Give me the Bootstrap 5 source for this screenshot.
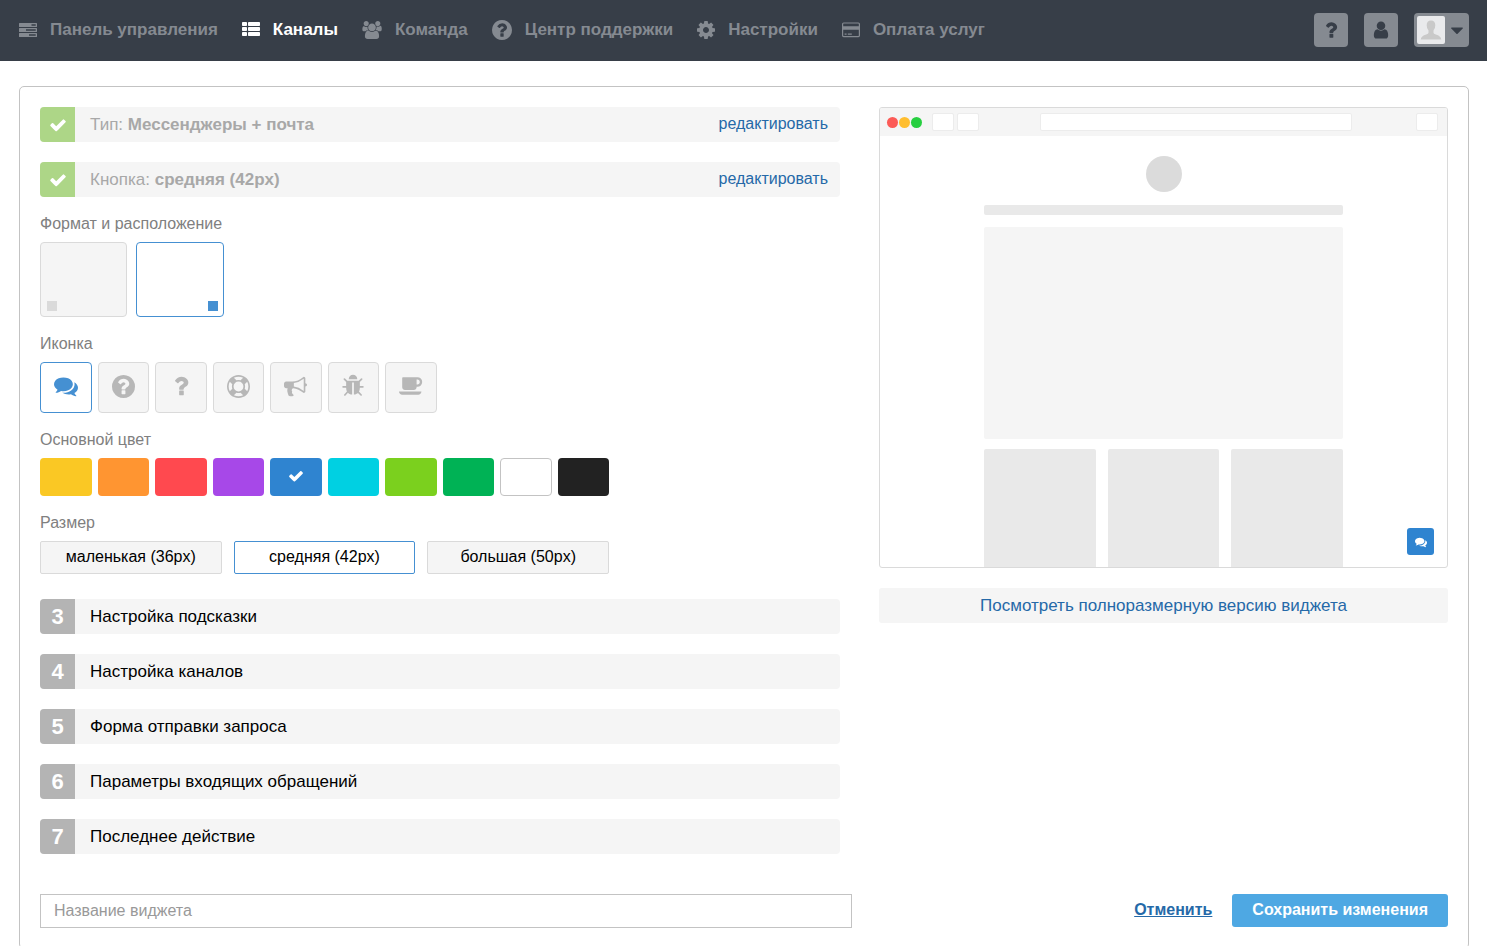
<!DOCTYPE html>
<html lang="ru">
<head>
<meta charset="utf-8">
<meta name="viewport" content="width=device-width, initial-scale=1">
<title>Настройка виджета</title>
<link rel="stylesheet" href="https://cdn.jsdelivr.net/npm/bootstrap@5.3.0/dist/css/bootstrap.min.css">
<style>
  :root {
    --ink: #373e48;
    --steel: #858a91;
    --fog: #f5f5f5;
    --line: #dadada;
    --accent: #4590d2;
    --link: #2569a8;
  }
  body { font-family: "Liberation Sans", Arial, sans-serif; font-size: 16px; color: #000; background: #fff; }
  svg { fill: currentColor; display: block; flex: none; }
  .icon-16 { width: 16px; height: 16px; }
  .icon-18 { width: 18px; height: 18px; }
  .icon-20 { width: 20px; height: 20px; }
  .icon-24 { width: 24px; height: 24px; }
  .icon-wide { width: 20px; height: 18px; }
  .icon-ring { width: 23px; height: 23px; }

  .topbar { background: var(--ink); min-height: 61px; padding: 0 18px 2px 19px; }
  .topbar .nav { column-gap: 24px; }
  .topbar .nav-link { display: flex; align-items: center; gap: 13px; padding: 0; color: var(--steel); font-size: 17px; font-weight: 700; line-height: 20px; }
  .topbar .nav-link.active { color: #fff; }
  .tool-btn { width: 34px; height: 34px; padding: 0; border: 0; border-radius: 4px; background: var(--steel); color: var(--ink); display: flex; align-items: center; justify-content: center; }
  .tool-btn:hover { background: #969ba2; color: var(--ink); }
  .tool-user { width: 55px; gap: 6px; padding-left: 3px; justify-content: flex-start; }
  .avatar { width: 28px; height: 28px; border-radius: 2px; background: #e9eaec; color: #c9c9c9; }

  .panel { margin: 25px 18px 20px 19px; padding: 20px; border: 1px solid #c3c3c3; border-radius: 5px; }
  .panel-cols { display: grid; grid-template-columns: minmax(0, 800fr) minmax(0, 569fr); column-gap: 39px; align-items: start; }

  .step { display: flex; align-items: stretch; width: 100%; min-height: 35px; padding: 0; border: 0; border-radius: 4px; overflow: hidden; background: var(--fog); color: #000; font-size: 17px; line-height: 35px; text-align: left; }
  .step-mark { flex: 0 0 35px; display: flex; align-items: center; justify-content: center; background: #b4b4b4; color: #fff; font-size: 22px; font-weight: 700; }
  .step-done { color: #a8a8a8; }
  .step-done .step-mark { background: #add687; }
  .step-text { flex: 1; padding-left: 15px; }
  .step a { font-size: 16px; color: var(--link); text-decoration: none; padding-right: 12px; line-height: 33px; }

  .choice { max-width: 569px; }
  .choice legend { float: none; margin: 0; padding: 17px 0 8px; font-size: 16px; line-height: 20px; color: #808080; }
  .choice-grid { display: grid; gap: 6px; grid-template-columns: repeat(10, minmax(0, 1fr)); }
  .choice-grid.by-six { gap: 9px; grid-template-columns: repeat(6, minmax(0, 1fr)); }
  .choice-grid.by-three { gap: 12px; grid-template-columns: repeat(3, minmax(0, 1fr)); }
  .choice .btn { --bs-btn-padding-x: 0; --bs-btn-padding-y: 0; --bs-btn-border-radius: 4px; --bs-btn-bg: var(--fog); --bs-btn-border-color: var(--line); --bs-btn-color: #b7b7b7; --bs-btn-active-bg: #fff; --bs-btn-active-border-color: var(--accent); --bs-btn-active-color: var(--accent); --bs-btn-hover-bg: #fff; --bs-btn-hover-border-color: var(--accent); display: flex; align-items: center; justify-content: center; }
  .choice .place { height: 75px; align-items: flex-end; justify-content: flex-start; padding: 5px 6px; }
  .choice .place.place-right { justify-content: flex-end; padding-right: 5px; }
  .place i { width: 10px; height: 10px; background: #dadada; }
  .btn-check:checked + .place i { background: var(--accent); }
  .choice .glyph { height: 51px; padding-bottom: 3px; }
  .choice .swatch { height: 38px; border: 1px solid transparent; color: #fff; padding-bottom: 3px; }
  .swatch svg { visibility: hidden; }
  .btn-check:checked + .swatch svg { visibility: visible; }
  .choice .btn-check:checked + .swatch { color: #fff; border-color: transparent; }
  .c-yellow { background: #fac824 !important; }
  .c-orange { background: #ff9531 !important; }
  .c-red { background: #ff494f !important; }
  .c-violet { background: #a748e8 !important; }
  .c-blue { background: #2f84d0 !important; }
  .c-cyan { background: #00d0e2 !important; }
  .c-lime { background: #7bd01e !important; }
  .c-green { background: #00b255 !important; }
  .choice .c-white { background: #fff; border-color: #c3c3c3; }
  .c-black { background: #222 !important; }
  .choice .size { height: 33px; border-radius: 2px; --bs-btn-color: #000; --bs-btn-active-color: #000; --bs-btn-hover-color: #000; font-size: 16px; line-height: 20px; padding-bottom: 2px; }
  .steps-next { margin-top: 25px; }
  .steps-gap { gap: 20px; }

  .preview { height: 461px; border: 1px solid var(--line); border-radius: 3px; overflow: hidden; display: flex; flex-direction: column; }
  .preview-bar { flex: none; height: 28px; padding: 0 9px 0 7px; background: var(--fog); display: flex; align-items: center; }
  .dots { display: flex; gap: 1px; margin-right: 10px; }
  .dot { width: 11px; height: 11px; border-radius: 50%; }
  .dot-red { background: #fc5b57; }
  .dot-amber { background: #ffbe2f; }
  .dot-green { background: #27cf40; }
  .slot { height: 18px; border: 1px solid #ececec; border-radius: 2px; background: #fff; flex: 0 0 22px; }
  .slot + .slot { margin-left: 3px; }
  .slot-address { flex: 0 1 312px; }
  .preview-page { flex: 1; min-height: 0; padding: 20px 104px 0; display: flex; flex-direction: column; }
  .ghost-face { width: 36px; height: 36px; border-radius: 50%; background: #dbdbdb; flex: none; }
  .ghost-line { height: 10px; margin: 13px 0 12px; border-radius: 2px; background: #e9e9e9; flex: none; }
  .ghost-hero { height: 212px; margin-bottom: 10px; border-radius: 2px; background: var(--fog); flex: none; }
  .ghost-cards { display: grid; grid-template-columns: repeat(3, 1fr); gap: 12px; flex: 1; }
  .ghost-cards div { background: #e9e9e9; border-radius: 2px 2px 0 0; }
  .widget { position: absolute; right: 13px; bottom: 12px; width: 27px; height: 27px; border-radius: 3px; background: #2f84d0; color: #fff; display: flex; align-items: center; justify-content: center; }
  .full-link { display: block; margin-top: 20px; border-radius: 3px; background: var(--fog); color: var(--link); font-size: 17px; line-height: 35px; text-align: center; text-decoration: none; }

  .panel-foot { margin-top: 40px; }
  .name-field { width: 57.7%; height: 34px; border: 1px solid #c3c3c3; border-radius: 0; padding: 0 13px; font-size: 16px; }
  .name-field::placeholder { color: #999; }
  .foot-actions { gap: 20px; }
  .cancel { color: var(--link); font-size: 16px; font-weight: 700; line-height: 32px; }
  .save { --bs-btn-bg: #4ea8e3; --bs-btn-hover-bg: #3f9ad6; --bs-btn-color: #fff; --bs-btn-hover-color: #fff; height: 33px; padding: 0 20px 2px; border: 0; border-radius: 3px; font-size: 16px; font-weight: 700; line-height: 31px; }
</style>
</head>
<body>

<svg class="d-none" aria-hidden="true">
  <symbol id="i-check" viewBox="0 0 1792 1792"><path d="M1671 566q0 40-28 68l-724 724-136 136q-28 28-68 28t-68-28l-136-136-362-362q-28-28-28-68t28-68l136-136q28-28 68-28t68 28l294 295 656-657q28-28 68-28t68 28l136 136q28 28 28 68z"/></symbol>
  <symbol id="i-comments" viewBox="0 0 1792 1792"><path d="M1408 768q0 139-94 257t-256.500 186.500-353.500 68.500q-86 0-176-16-124 88-278 128-36 9-86 16h-3q-11 0-20.500-8t-11.500-21q-1-3-1-6.500t.5-6.500 2-6l2.500-5 3.500-5.500 4-5 4.500-5 4-4.500q5-6 23-25t26-29.500 22.500-29 25-38.500 20.500-44q-124-72-195-177t-71-224q0-139 94-257t256.500-186.500 353.500-68.500 353.500 68.500 256.500 186.500 94 257zm384 256q0 120-71 224.500t-195 176.500q10 24 20.500 44t25 38.500 22.500 29 26 29.500 23 25q1 1 4 4.500t4.500 5 4 5 3.500 5.500l2.500 5 2 6 .5 6.500-1 6.500q-3 14-13 22t-22 7q-50-7-86-16-154-40-278-128-90 16-176 16-271 0-472-132 58 4 88 4 161 0 309-45t264-129q125-92 192-212t67-254q0-77-23-152 129 71 204 178t75 230z"/></symbol>
  <symbol id="i-question-circle" viewBox="128 128 1536 1536"><path d="M1024 1376v-192q0-14-9-23t-23-9h-192q-14 0-23 9t-9 23v192q0 14 9 23t23 9h192q14 0 23-9t9-23zm256-672q0-88-55.500-163t-138.500-116-170-41q-243 0-371 213-15 24 8 42l132 100q7 6 19 6 16 0 25-12 53-68 86-92 34-24 86-24 48 0 85.500 26t37.500 59q0 38-20 61t-68 45q-63 28-115.500 86.500t-52.500 125.500v36q0 14 9 23t23 9h192q14 0 23-9t9-23q0-19 21.500-49.500t54.500-49.500q32-18 49-28.500t46-35 44.500-48 28-60.500 12.500-81zm384 192q0 209-103 385.500t-279.500 279.500-385.500 103-385.500-103-279.500-279.500-103-385.500 103-385.500 279.500-279.500 385.500-103 385.500 103 279.500 279.500 103 385.500z"/></symbol>
  <symbol id="i-question" viewBox="64 64 1664 1664"><path d="M1088 1256v240q0 16-12 28t-28 12h-240q-16 0-28-12t-12-28v-240q0-16 12-28t28-12h240q16 0 28 12t12 28zm316-600q0 54-15.500 101t-35 76.500-55 59.500-57.500 43.500-61 35.500q-41 23-68.500 65t-27.500 67q0 17-12 32.500t-28 15.500h-240q-15 0-25.500-18.500t-10.500-37.500v-45q0-83 65-156.500t143-108.500q59-27 84-56t25-76q0-42-46.500-74t-107.500-32q-65 0-108 29-35 25-107 115-13 16-31 16-12 0-25-8l-164-125q-13-10-15.500-25t5.500-28q160-266 464-266 80 0 161 31t146 83 106 127.500 41 158.500z"/></symbol>
  <symbol id="i-ring" viewBox="0 0 1792 1792"><path d="M896 0q182 0 348 71t286 191 191 286 71 348-71 348-191 286-286 191-348 71-348-71-286-191-191-286-71-348 71-348 191-286 286-191 348-71zm0 128q-190 0-361 90l194 194q82-28 167-28t167 28l194-194q-171-90-361-90zm-678 1129l194-194q-28-82-28-167t28-167l-194-194q-90 171-90 361t90 361zm678 407q190 0 361-90l-194-194q-82 28-167 28t-167-28l-194 194q171 90 361 90zm0-384q159 0 271.500-112.500t112.500-271.500-112.500-271.500-271.500-112.500-271.500 112.500-112.500 271.500 112.500 271.500 271.500 112.500zm484-217l194 194q90-171 90-361t-90-361l-194 194q28 82 28 167t-28 167z"/></symbol>
  <symbol id="i-bullhorn" viewBox="0 0 1792 1792"><path d="M1664 640q53 0 90.500 37.500t37.500 90.500-37.500 90.500-90.500 37.500v384q0 52-38 90t-90 38q-417-347-812-380-58 19-91 66t-31 100.500 40 92.500q-20 33-23 65.500t6 58 33.500 55 48 50 61.500 50.500q-29 58-111.500 83t-168.500 11.500-132-55.500q-7-23-29.500-87.500t-32-94.500-23-89-15-101 3.500-98.500 22-110.500h-122q-66 0-113-47t-47-113v-192q0-66 47-113t113-47h480q435 0 896-384 52 0 90 38t38 90v384zm-128 604v-954q-394 302-768 343v270q377 42 768 341z"/></symbol>
  <symbol id="i-bug" viewBox="0 0 1792 1792"><path d="M1696 960q0 26-19 45t-45 19h-224q0 171-67 290l208 209q19 19 19 45t-19 45q-18 19-45 19t-45-19l-198-197q-5 5-15 13t-42 28.500-65 36.500-82 29-97 13v-896h-128v896q-51 0-101.500-13.500t-87-33-66-39-43.500-32.500l-15-14-183 207q-20 21-48 21-24 0-43-16-19-18-20.500-44.500t15.500-46.500l202-227q-58-114-58-274h-224q-26 0-45-19t-19-45 19-45 45-19h224v-294l-173-173q-19-19-19-45t19-45 45-19 45 19l173 173h844l173-173q19-19 45-19t45 19 19 45-19 45l-173 173v294h224q26 0 45 19t19 45zm-480-576h-640q0-133 93.500-226.500t226.500-93.500 226.500 93.500 93.500 226.500z"/></symbol>
  <symbol id="i-coffee" viewBox="0 64 1920 1792"><path d="M1664 640q0-80-56-136t-136-56h-64v384h64q80 0 136-56t56-136zm-1664 768h1792q0 106-75 181t-181 75h-1280q-106 0-181-75t-75-181zm1856-768q0 159-112.500 271.500t-271.500 112.500h-64v32q0 92-66 158t-158 66h-704q-92 0-158-66t-66-158v-736q0-26 19-45t45-19h1152q159 0 271.500 112.500t112.500 271.500z"/></symbol>
  <symbol id="i-cog" viewBox="128 128 1536 1536"><path d="M1152 896q0-106-75-181t-181-75-181 75-75 181 75 181 181 75 181-75 75-181zm512-109v222q0 12-8 23t-20 13l-185 28q-19 54-39 91 35 50 107 138 10 12 10 25t-9 23q-27 37-99 108t-94 71q-12 0-26-9l-138-108q-44 23-91 38-16 136-29 186-7 28-36 28h-222q-14 0-24.500-8.500t-11.500-21.500l-28-184q-49-16-90-37l-141 107q-10 9-25 9-14 0-25-11-126-114-165-168-7-10-7-23 0-12 8-23 15-21 51-66.500t54-70.500q-27-50-41-99l-183-27q-13-2-21-12.500t-8-23.500v-222q0-12 8-23t19-13l186-28q14-46 39-92-40-57-107-138-10-12-10-24 0-10 9-23 26-36 98.500-107.500t94.500-71.500q13 0 26 10l138 107q44-23 91-38 16-136 29-186 7-28 36-28h222q14 0 24.500 8.500t11.500 21.500l28 184q49 16 90 37l142-107q9-9 24-9 13 0 25 10 129 119 165 170 7 8 7 22 0 12-8 23-15 21-51 66.500t-54 70.500q26 50 41 98l183 28q13 2 21 12.500t8 23.500z"/></symbol>
  <symbol id="i-user" viewBox="0 0 1792 1792"><path d="M1536 1399q0 109-62.500 187t-150.500 78h-854q-88 0-150.500-78t-62.500-187q0-85 8.500-160.500t31.500-152 58.500-131 94-89 134.500-34.500q131 128 313 128t313-128q76 0 134.500 34.500t94 89 58.500 131 31.500 152 8.500 160.500zm-256-887q0 159-112.500 271.500t-271.500 112.500-271.500-112.500-112.500-271.500 112.500-271.500 271.500-112.500 271.500 112.500 112.500 271.500z"/></symbol>
  <symbol id="i-users" viewBox="0 0 1920 1792"><path d="M593 896q-162 5-265 128h-134q-82 0-138-40.500t-56-118.500q0-353 124-353 6 0 43.500 21t97.500 42.500 119 21.500q67 0 133-23-5 37-5 66 0 159 93 293zm1071 637q0 120-73 189.500t-194 69.500h-874q-121 0-194-69.500t-73-189.500q0-53 3.500-103.500t14-109 26.500-108.500 43-97.500 62-81 85.500-53.500 111.500-20q10 0 43 21.500t73 48 107 48 135 21.500 135-21.500 107-48 73-48 43-21.500q61 0 111.500 20t85.500 53.500 62 81 43 97.500 26.500 108.500 14 109 3.500 103.500zm-1024-1277q0 106-75 181t-181 75-181-75-75-181 75-181 181-75 181 75 75 181zm704 384q0 159-112.500 271.500t-271.500 112.500-271.500-112.500-112.500-271.500 112.500-271.500 271.500-112.500 271.500 112.500 112.500 271.500zm576 225q0 78-56 118.500t-138 40.500h-134q-103-123-265-128 93-134 93-293 0-29-5-66 66 23 133 23 59 0 119-21.500t97.500-42.500 43.500-21q124 0 124 353zm-128-609q0 106-75 181t-181 75-181-75-75-181 75-181 181-75 181 75 75 181z"/></symbol>
  <symbol id="i-tasks" viewBox="0 0 18 18"><path fill-rule="evenodd" d="M.6 2h16.800q.6 0 .6.600v2.800q0 .6-.6.600H.6q-.6 0-.6-.6V2.600Q0 2 .6 2zm11.900 1.300v1.400h4.200V3.300zM.6 7h16.800q.6 0 .6.600v2.800q0 .6-.6.600H.6q-.6 0-.6-.6V7.600Q0 7 .6 7zm6.400 1.300v1.400h9.700V8.300zM.6 12h16.800q.6 0 .6.600v2.800q0 .6-.6.600H.6q-.6 0-.6-.6v-2.800q0-.6.600-.6zm9.400 1.300v1.400h6.700v-1.400z"/></symbol>
  <symbol id="i-list" viewBox="0 0 18 18"><rect x="0" y="1" width="5" height="4" rx=".8"/><rect x="6" y="1" width="12" height="4" rx=".8"/><rect x="0" y="6" width="5" height="4" rx=".8"/><rect x="6" y="6" width="12" height="4" rx=".8"/><rect x="0" y="11" width="5" height="4" rx=".8"/><rect x="6" y="11" width="12" height="4" rx=".8"/></symbol>
  <symbol id="i-card" viewBox="0 0 18 18"><path fill-rule="evenodd" d="M1.600 1.400h14.800q1.600 0 1.600 1.600v11.600q0 1.600-1.600 1.600H1.600Q0 16.200 0 14.600V3q0-1.600 1.600-1.600zm0 1.200q-.4 0-.4.400v2.200h15.600V3q0-.4-.4-.4zM1.200 8.800v5.800q0 .4.400.4h14.800q.4 0 .4-.4V8.800zM2.600 12.600h2v1.200h-2zm3.200 0h4v1.200h-4z"/></symbol>
  <symbol id="i-face" viewBox="0 0 28 28"><path d="M14 4.500q4.300 0 4.300 4.700 0 3.400-1.800 5.300v2.300q0 1 2.300 1.800 5 1.500 5.500 4.900H3.700q.5-3.400 5.500-4.900 2.300-.8 2.300-1.800v-2.300Q9.700 12.600 9.700 9.200q0-4.700 4.300-4.700z"/></symbol>
</svg>

<header class="topbar navbar d-flex justify-content-between">
  <nav class="nav" aria-label="Основное меню">
    <a class="nav-link" href="#"><svg class="icon-18"><use href="#i-tasks"/></svg>Панель управления</a>
    <a class="nav-link active" aria-current="page" href="#"><svg class="icon-18"><use href="#i-list"/></svg>Каналы</a>
    <a class="nav-link" href="#"><svg class="icon-wide"><use href="#i-users"/></svg>Команда</a>
    <a class="nav-link" href="#"><svg class="icon-20"><use href="#i-question-circle"/></svg>Центр поддержки</a>
    <a class="nav-link" href="#"><svg class="icon-18"><use href="#i-cog"/></svg>Настройки</a>
    <a class="nav-link" href="#"><svg class="icon-18"><use href="#i-card"/></svg>Оплата услуг</a>
  </nav>
  <div class="d-flex gap-3">
    <button type="button" class="tool-btn" aria-label="Помощь"><svg class="icon-20"><use href="#i-question"/></svg></button>
    <button type="button" class="tool-btn" aria-label="Профиль"><svg class="icon-20"><use href="#i-user"/></svg></button>
    <button type="button" class="tool-btn tool-user" aria-label="Меню пользователя">
      <svg class="avatar"><use href="#i-face"/></svg>
      <svg width="12" height="8" viewBox="0 0 12 8"><path d="M.6 1.500h10.800q.8.200.3 1L6.600 7.700q-.6.500-1.200 0L.3 2.500q-.5-.8.300-1z"/></svg>
    </button>
  </div>
</header>

<main class="panel">
  <div class="panel-cols">
    <section>
      <div class="d-flex flex-column steps-gap">
        <div class="step step-done">
          <span class="step-mark"><svg class="icon-18"><use href="#i-check"/></svg></span>
          <span class="step-text">Тип: <b>Мессенджеры + почта</b></span>
          <a href="#">редактировать</a>
        </div>
        <div class="step step-done">
          <span class="step-mark"><svg class="icon-18"><use href="#i-check"/></svg></span>
          <span class="step-text">Кнопка: <b>средняя (42px)</b></span>
          <a href="#">редактировать</a>
        </div>
      </div>

      <fieldset class="choice">
        <legend>Формат и расположение</legend>
        <div class="choice-grid by-six">
          <input class="btn-check" type="radio" name="place" id="place-l"><label class="btn place" for="place-l" aria-label="Слева"><i></i></label>
          <input class="btn-check" type="radio" name="place" id="place-r" checked><label class="btn place place-right" for="place-r" aria-label="Справа"><i></i></label>
        </div>
      </fieldset>

      <fieldset class="choice">
        <legend>Иконка</legend>
        <div class="choice-grid">
          <input class="btn-check" type="radio" name="icon" id="ic-1" checked><label class="btn glyph" for="ic-1" aria-label="Чат"><svg class="icon-24"><use href="#i-comments"/></svg></label>
          <input class="btn-check" type="radio" name="icon" id="ic-2"><label class="btn glyph" for="ic-2" aria-label="Вопрос в круге"><svg class="icon-ring"><use href="#i-question-circle"/></svg></label>
          <input class="btn-check" type="radio" name="icon" id="ic-3"><label class="btn glyph" for="ic-3" aria-label="Вопрос"><svg class="icon-24"><use href="#i-question"/></svg></label>
          <input class="btn-check" type="radio" name="icon" id="ic-4"><label class="btn glyph" for="ic-4" aria-label="Спасательный круг"><svg class="icon-ring"><use href="#i-ring"/></svg></label>
          <input class="btn-check" type="radio" name="icon" id="ic-5"><label class="btn glyph" for="ic-5" aria-label="Рупор"><svg class="icon-ring"><use href="#i-bullhorn"/></svg></label>
          <input class="btn-check" type="radio" name="icon" id="ic-6"><label class="btn glyph" for="ic-6" aria-label="Жук"><svg class="icon-24"><use href="#i-bug"/></svg></label>
          <input class="btn-check" type="radio" name="icon" id="ic-7"><label class="btn glyph" for="ic-7" aria-label="Кофе"><svg class="icon-24"><use href="#i-coffee"/></svg></label>
        </div>
      </fieldset>

      <fieldset class="choice">
        <legend>Основной цвет</legend>
        <div class="choice-grid">
          <input class="btn-check" type="radio" name="color" id="c-1"><label class="btn swatch c-yellow" for="c-1" aria-label="Жёлтый"><svg class="icon-16"><use href="#i-check"/></svg></label>
          <input class="btn-check" type="radio" name="color" id="c-2"><label class="btn swatch c-orange" for="c-2" aria-label="Оранжевый"><svg class="icon-16"><use href="#i-check"/></svg></label>
          <input class="btn-check" type="radio" name="color" id="c-3"><label class="btn swatch c-red" for="c-3" aria-label="Красный"><svg class="icon-16"><use href="#i-check"/></svg></label>
          <input class="btn-check" type="radio" name="color" id="c-4"><label class="btn swatch c-violet" for="c-4" aria-label="Фиолетовый"><svg class="icon-16"><use href="#i-check"/></svg></label>
          <input class="btn-check" type="radio" name="color" id="c-5" checked><label class="btn swatch c-blue" for="c-5" aria-label="Синий"><svg class="icon-16"><use href="#i-check"/></svg></label>
          <input class="btn-check" type="radio" name="color" id="c-6"><label class="btn swatch c-cyan" for="c-6" aria-label="Бирюзовый"><svg class="icon-16"><use href="#i-check"/></svg></label>
          <input class="btn-check" type="radio" name="color" id="c-7"><label class="btn swatch c-lime" for="c-7" aria-label="Салатовый"><svg class="icon-16"><use href="#i-check"/></svg></label>
          <input class="btn-check" type="radio" name="color" id="c-8"><label class="btn swatch c-green" for="c-8" aria-label="Зелёный"><svg class="icon-16"><use href="#i-check"/></svg></label>
          <input class="btn-check" type="radio" name="color" id="c-9"><label class="btn swatch c-white" for="c-9" aria-label="Белый"></label>
          <input class="btn-check" type="radio" name="color" id="c-10"><label class="btn swatch c-black" for="c-10" aria-label="Чёрный"><svg class="icon-16"><use href="#i-check"/></svg></label>
        </div>
      </fieldset>

      <fieldset class="choice">
        <legend>Размер</legend>
        <div class="choice-grid by-three">
          <input class="btn-check" type="radio" name="size" id="s-1"><label class="btn size" for="s-1">маленькая (36px)</label>
          <input class="btn-check" type="radio" name="size" id="s-2" checked><label class="btn size" for="s-2">средняя (42px)</label>
          <input class="btn-check" type="radio" name="size" id="s-3"><label class="btn size" for="s-3">большая (50px)</label>
        </div>
      </fieldset>

      <div class="d-flex flex-column steps-gap steps-next">
        <button type="button" class="step"><span class="step-mark">3</span><span class="step-text">Настройка подсказки</span></button>
        <button type="button" class="step"><span class="step-mark">4</span><span class="step-text">Настройка каналов</span></button>
        <button type="button" class="step"><span class="step-mark">5</span><span class="step-text">Форма отправки запроса</span></button>
        <button type="button" class="step"><span class="step-mark">6</span><span class="step-text">Параметры входящих обращений</span></button>
        <button type="button" class="step"><span class="step-mark">7</span><span class="step-text">Последнее действие</span></button>
      </div>
    </section>

    <aside>
      <div class="preview position-relative">
        <div class="preview-bar">
          <div class="dots">
            <span class="dot dot-red"></span>
            <span class="dot dot-amber"></span>
            <span class="dot dot-green"></span>
          </div>
          <span class="slot"></span>
          <span class="slot"></span>
          <span class="slot slot-address mx-auto"></span>
          <span class="slot"></span>
        </div>
        <div class="preview-page">
          <div class="ghost-face align-self-center"></div>
          <div class="ghost-line"></div>
          <div class="ghost-hero"></div>
          <div class="ghost-cards"><div></div><div></div><div></div></div>
        </div>
        <div class="widget"><svg width="12" height="12"><use href="#i-comments"/></svg></div>
      </div>
      <a class="full-link" href="#">Посмотреть полноразмерную версию виджета</a>
    </aside>
  </div>

  <form class="panel-foot d-flex align-items-start justify-content-between">
    <input class="name-field form-control" type="text" placeholder="Название виджета" aria-label="Название виджета">
    <div class="foot-actions d-flex align-items-start">
      <a class="cancel" href="#">Отменить</a>
      <button type="button" class="btn save">Сохранить изменения</button>
    </div>
  </form>
</main>

<script src="https://cdn.jsdelivr.net/npm/bootstrap@5.3.0/dist/js/bootstrap.bundle.min.js"></script>
</body>
</html>
